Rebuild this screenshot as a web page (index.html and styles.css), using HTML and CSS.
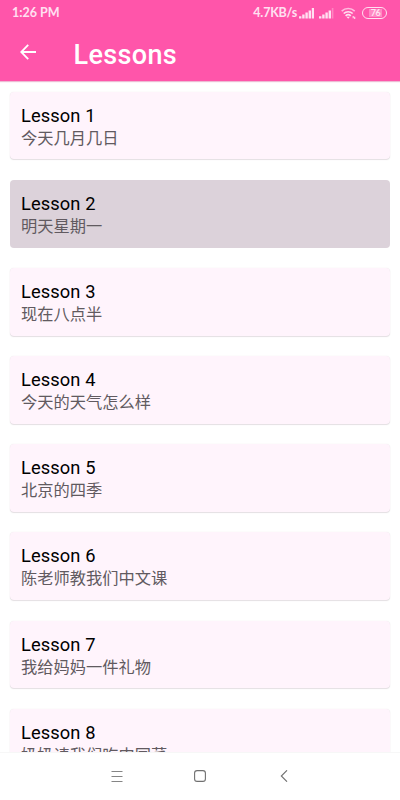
FILE: index.html
```html
<!DOCTYPE html>
<html lang="zh-CN">
<head>
  <meta charset="UTF-8">
  <meta name="viewport" content="width=device-width, initial-scale=1.0">
  <title>Lessons</title>
  <link rel="stylesheet" href="styles.css">
</head>
<body>

  <header class="header">
    <!-- Status bar -->
    <div class="status-bar">
      <span class="time">1:26 PM</span>
      <span class="speed">4.7KB/s</span>
      <svg class="signal" width="16" height="12" viewBox="0 0 16 12" fill="#ffe0f1">
        <path d="M0 9.3h2.4v2.2H0zM3.2 7.6h2.4v3.9H3.2zM6.4 5.6h2.4v5.9H6.4zM9.6 3.4H12v8.1H9.6zM12.8 1h2.2v10.5h-2.2z"/>
      </svg>
      <svg class="signal-two" width="16" height="12" viewBox="0 0 16 12" fill="#ffe0f1">
        <path d="M0 9.3h2.4v2.2H0zM3.2 7.6h2.4v3.9H3.2zM6.4 5.6h2.4v5.9H6.4zM9.6 3.4H12v8.1H9.6z"/>
        <path d="M12.8 1h1.6v10.5h-1.6z" opacity=".35"/>
      </svg>
      <svg class="wifi" width="16" height="12" viewBox="0 0 16 12" fill="none" stroke="#ffe0f1" stroke-width="1.6">
        <path d="M.7 4.1a9.5 9.5 0 0 1 13 0" opacity=".75"/>
        <path d="M2.7 6.5a6.5 6.5 0 0 1 9 0M4.6 8.8a3.8 3.8 0 0 1 5.2 0"/>
        <path d="M5.5 9.7L7.2 11.8 8.9 9.7z" fill="#ffe0f1" stroke="none"/>
        <path d="M12.2 9v2.2M13.7 9.8v2.2" stroke-width="1.1"/>
      </svg>
      <span class="battery"><span class="battery-level">76</span></span>
    </div>

    <!-- Title bar -->
    <div class="toolbar">
      <svg class="back" width="16" height="16" viewBox="0 0 16 16" fill="none" stroke="#fff" stroke-width="1.8">
        <path d="M16 8H1.5M8.2 .8L1.2 8l7 7.2"/>
      </svg>
      <h1>Lessons</h1>
    </div>
  </header>

  <main class="lessons">
    <div class="card">
      <div class="name">Lesson 1</div>
      <div class="topic">今天几月几日</div>
    </div>
    <div class="card selected">
      <div class="name">Lesson 2</div>
      <div class="topic">明天星期一</div>
    </div>
    <div class="card">
      <div class="name">Lesson 3</div>
      <div class="topic">现在八点半</div>
    </div>
    <div class="card">
      <div class="name">Lesson 4</div>
      <div class="topic">今天的天气怎么样</div>
    </div>
    <div class="card">
      <div class="name">Lesson 5</div>
      <div class="topic">北京的四季</div>
    </div>
    <div class="card">
      <div class="name">Lesson 6</div>
      <div class="topic">陈老师教我们中文课</div>
    </div>
    <div class="card">
      <div class="name">Lesson 7</div>
      <div class="topic">我给妈妈一件礼物</div>
    </div>
    <div class="card">
      <div class="name">Lesson 8</div>
      <div class="topic">奶奶请我们吃中国菜</div>
    </div>
  </main>

  <!-- Navigation buttons -->
  <nav class="nav-bar">
    <svg width="12" height="12" viewBox="0 0 12 12" fill="none" stroke="#858585">
      <path d="M.5 1.5h11M.5 6.5h11M.5 11.5h11"/>
    </svg>
    <svg width="12" height="12" viewBox="0 0 12 12" fill="none" stroke="#707070" stroke-width="1.1">
      <rect x=".6" y=".6" width="10.8" height="10.8" rx="2.5"/>
    </svg>
    <svg width="12" height="12" viewBox="0 0 12 12" fill="none" stroke="#707070" stroke-width="1.1">
      <path d="M10 .3L4.3 6 10 11.7"/>
    </svg>
  </nav>

</body>
</html>
```

FILE: styles.css
```css
body {
  margin: 0;
  height: 800px;
  display: flex;
  flex-direction: column;
  overflow: hidden;
  background-color: #fff;
  font-family: Roboto, "Noto Sans CJK SC", sans-serif;
}
.header {
  flex: none;
  height: 81px;
  background-color: #ff55aa;
  box-shadow: 0 1px 1px rgba(200, 60, 130, 0.35);
}
.status-bar {
  display: flex;
  align-items: center;
  height: 25px;
  padding: 0 13px 0 12px;
  color: #ffe0f1;
  font-family: Lato, sans-serif;
  font-size: 12.5px;
  font-weight: bold;
}
.time {
  flex: 1;
}
.speed {
  margin-right: 2px;
  letter-spacing: -0.2px;
}
.signal {
  margin-right: 4px;
}
.signal-two {
  margin-right: 6px;
}
.wifi {
  margin-right: 5px;
}
.battery {
  box-sizing: border-box;
  width: 25px;
  height: 12px;
  padding: 1px 4px 1px 6px;
  border: 1px solid #ffe0f1;
  border-radius: 6px;
}
.battery-level {
  display: block;
  height: 8px;
  background-color: rgba(255, 255, 255, 0.3);
  font-size: 9px;
  line-height: 8px;
  text-align: center;
  letter-spacing: -0.5px;
}
/* Title bar */
.toolbar {
  display: flex;
  align-items: center;
  height: 56px;
  padding-left: 20px;
}
.back {
  margin: 0 37.5px 2px 0;
}
h1 {
  margin: 4px 0 0;
  color: #fff;
  font-size: 27px;
  font-weight: 500;
  line-height: 32px;
  letter-spacing: 0.35px;
}
/* Lesson list */
.lessons {
  flex: 1;
  min-height: 0;
  overflow: hidden;
  padding: 10.8px 10px 0;
}
.card {
  box-sizing: border-box;
  height: 67.7px;
  margin-bottom: 20.45px;
  padding: 13px 11px 0;
  border-radius: 4px;
  background-color: #fff4fc;
  box-shadow: 0 1px 1px rgba(80, 50, 70, 0.14), 0 0 1px rgba(80, 50, 70, 0.12);
}
.selected {
  background-color: #dcd2da;
  box-shadow: none;
}
.name {
  color: #000;
  font-size: 18.3px;
  line-height: 22px;
  letter-spacing: 0.1px;
}
.topic {
  color: #615a60;
  font-size: 16.25px;
  line-height: 23px;
}
/* Navigation buttons */
.nav-bar {
  box-sizing: border-box;
  flex: none;
  display: flex;
  justify-content: center;
  align-items: center;
  gap: 71px;
  height: 48px;
  padding-bottom: 2px;
  border-top: 1px solid #f7f7f7;
  background-color: #fff;
}
```
